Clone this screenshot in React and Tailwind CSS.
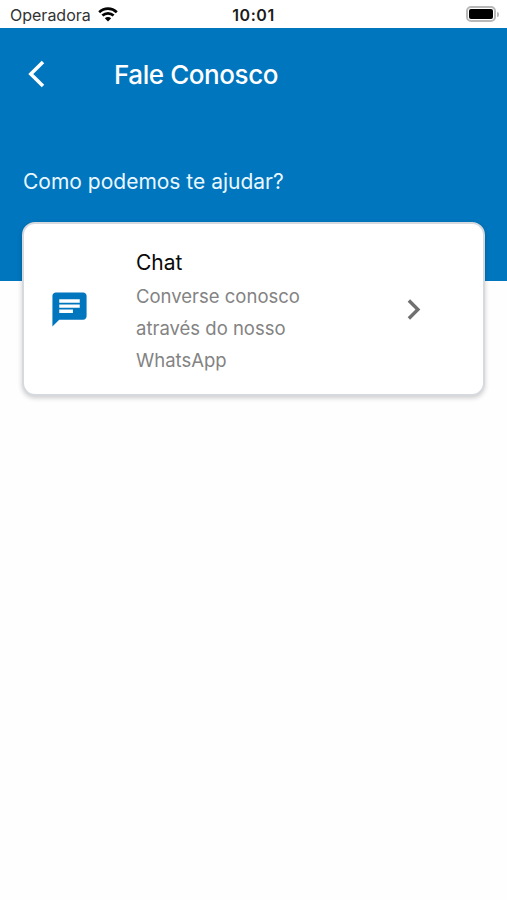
function StatusBar() {
  return (
    <div className="grid h-7 grid-cols-3 items-center bg-white text-[#1c1c1c]">
      <div className="flex items-center gap-[7px] pl-[10px]">
        <span className="pt-[2px] text-[16px] leading-5 text-[#333]">Operadora</span>
        <svg width="20" height="15" viewBox="0 0 20 15" fill="none" stroke="#050505" strokeWidth="2.7">
          <path d="M1.2 5.2C6.2 .5 13.8 .5 18.8 5.2" />
          <path d="M4.4 8.6C7.6 5.6 12.4 5.6 15.6 8.6" />
          <path d="M6.8 11.2C8.6 9.5 11.4 9.5 13.2 11.2L10 14.4Z" fill="#050505" stroke="none" />
        </svg>
      </div>
      <div className="pt-px text-center text-[16px] font-semibold leading-5 tracking-[0.6px]">10:01</div>
      <div className="flex items-center justify-end pr-[8px]">
        <div className="h-[16px] w-[30px] rounded-[5px] border-2 border-[#b8b8b8] p-px">
          <div className="h-full rounded-[2px] bg-black" />
        </div>
        <div className="ml-px h-[5px] w-[2px] rounded-r-full bg-[#b8b8b8]" />
      </div>
    </div>
  );
}

export default function App() {
  return (
    <div className="h-[900px] w-[507px] overflow-hidden bg-[#fefefe] font-['Inter','Liberation_Sans',sans-serif]">
      <StatusBar />
      <div className="h-[253px] bg-[#0076be] text-white">
        <header className="flex h-[92px] items-center pl-[27px]">
          <svg width="18" height="28" viewBox="0 0 18 28" fill="none" stroke="white" strokeWidth="3.5">
            <path d="M16 2L3.8 14L16 26" />
          </svg>
          <h1 className="ml-[69px] mt-[2px] whitespace-nowrap text-[26px] font-medium leading-8 tracking-[-0.42px]">Fale Conosco</h1>
        </header>
        <p className="ml-[23px] mt-[47px] whitespace-nowrap text-[21px] leading-[30px] text-[#eaf7ff]">Como podemos te ajudar?</p>
      </div>
      <section className="relative mx-[22px] -mt-[59px] flex h-[174px] items-center rounded-[13px] border-2 border-[#d6dade] bg-white shadow-[0_2px_5px_rgba(0,0,0,0.2)]">
        <svg className="ml-[25px] mt-px shrink-0" width="41" height="41" viewBox="0 0 24 24" fill="#0076be">
          <path d="M20 2H4c-1.1 0-1.99.9-1.99 2L2 22l4-4h14c1.1 0 2-.9 2-2V4c0-1.1-.9-2-2-2zM6 9h12v2H6V9zm8 5H6v-2h8v2zm4-6H6V6h12v2z" />
        </svg>
        <div className="ml-[46px] mt-[4px] w-[200px] text-[18.5px] leading-[32.3px] text-[#838383]">
          <h2 className="text-[21px] leading-[34px] text-[#0a0a0a]">Chat</h2>
          <p>Converse conosco<br />através do nosso<br />WhatsApp</p>
        </div>
        <svg className="ml-[57px] mt-px shrink-0" width="41" height="41" viewBox="0 0 24 24" fill="#707070">
          <path d="M10 6L8.59 7.41 13.17 12l-4.58 4.59L10 18l6-6z" />
        </svg>
      </section>
    </div>
  );
}
